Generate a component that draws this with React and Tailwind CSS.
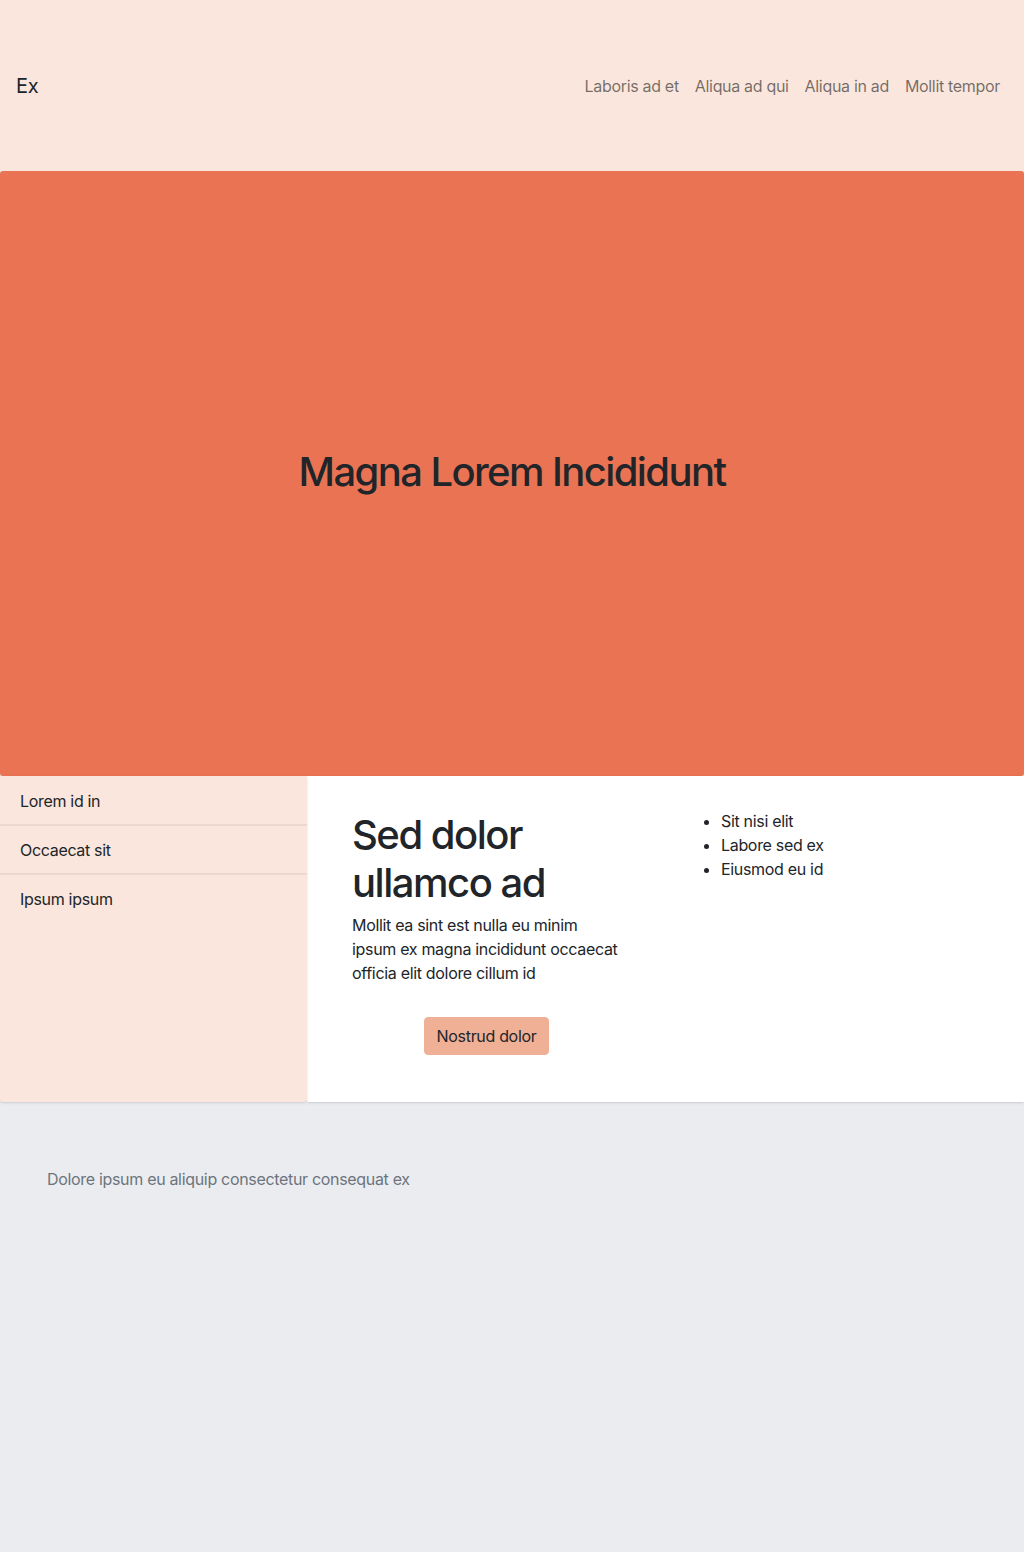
export default function App() {
  return (
    <div className="min-h-[1552px] flex flex-col bg-[#ebecf0] text-[#212529] tracking-[-0.02em]" style={{ fontFamily: 'Inter, "Noto Sans", sans-serif' }}>
      <header className="h-[171px] bg-[#fae6dc] flex items-center justify-between pl-4 pr-6">
        <span className="text-xl leading-[30px]">Ex</span>
        <nav className="flex text-base text-[rgba(0,0,0,0.55)]">
          <a className="px-2">Laboris ad et</a>
          <a className="px-2">Aliqua ad qui</a>
          <a className="px-2">Aliqua in ad</a>
          <a className="pl-2">Mollit tempor</a>
        </nav>
      </header>
      <section className="h-[605px] bg-[#ea7353] rounded-[3px] shadow-md flex items-center justify-center pb-[4px]">
        <h1 className="text-[40px] leading-[48px] font-medium tracking-[-0.04em]">Magna Lorem Incididunt</h1>
      </section>
      <div className="flex h-[326px]">
        <aside className="w-[307px] bg-[#fae6dc] shadow-sm rounded-b-[3px] z-10 pt-px">
          {["Lorem id in", "Occaecat sit", "Ipsum ipsum"].map((t, i) => (
            <div key={t} className={"px-5 pt-3 leading-6 " + (i < 2 ? "pb-[11px] border-b-2 border-[#ecd8ce]" : "pb-3")}>{t}</div>
          ))}
        </aside>
        <main className="flex-1 bg-white shadow-sm flex pl-[45px] pt-[35px]">
          <div className="w-[269px]">
            <h2 className="text-[40px] leading-[48px] font-medium tracking-[-0.037em]">Sed dolor ullamco ad</h2>
            <p className="mt-[6px] leading-6">Mollit ea sint est nulla eu minim ipsum ex magna incididunt occaecat officia elit dolore cillum id</p>
            <div className="flex justify-center mt-8">
              <button className="bg-[#f0b096] border border-[#f0b096] rounded-[4px] px-3 py-[6px] leading-6 tracking-[-0.02em]">Nostrud dolor</button>
            </div>
          </div>
          <ul className="ml-[68px] pl-8 list-disc leading-6 -mt-[2px]">
            <li>Sit nisi elit</li>
            <li>Labore sed ex</li>
            <li>Eiusmod eu id</li>
          </ul>
        </main>
      </div>
      <footer className="flex-1 pt-[65px] px-[47px] text-[#6c757d] leading-6">
        Dolore ipsum eu aliquip consectetur consequat ex
      </footer>
    </div>
  );
}
